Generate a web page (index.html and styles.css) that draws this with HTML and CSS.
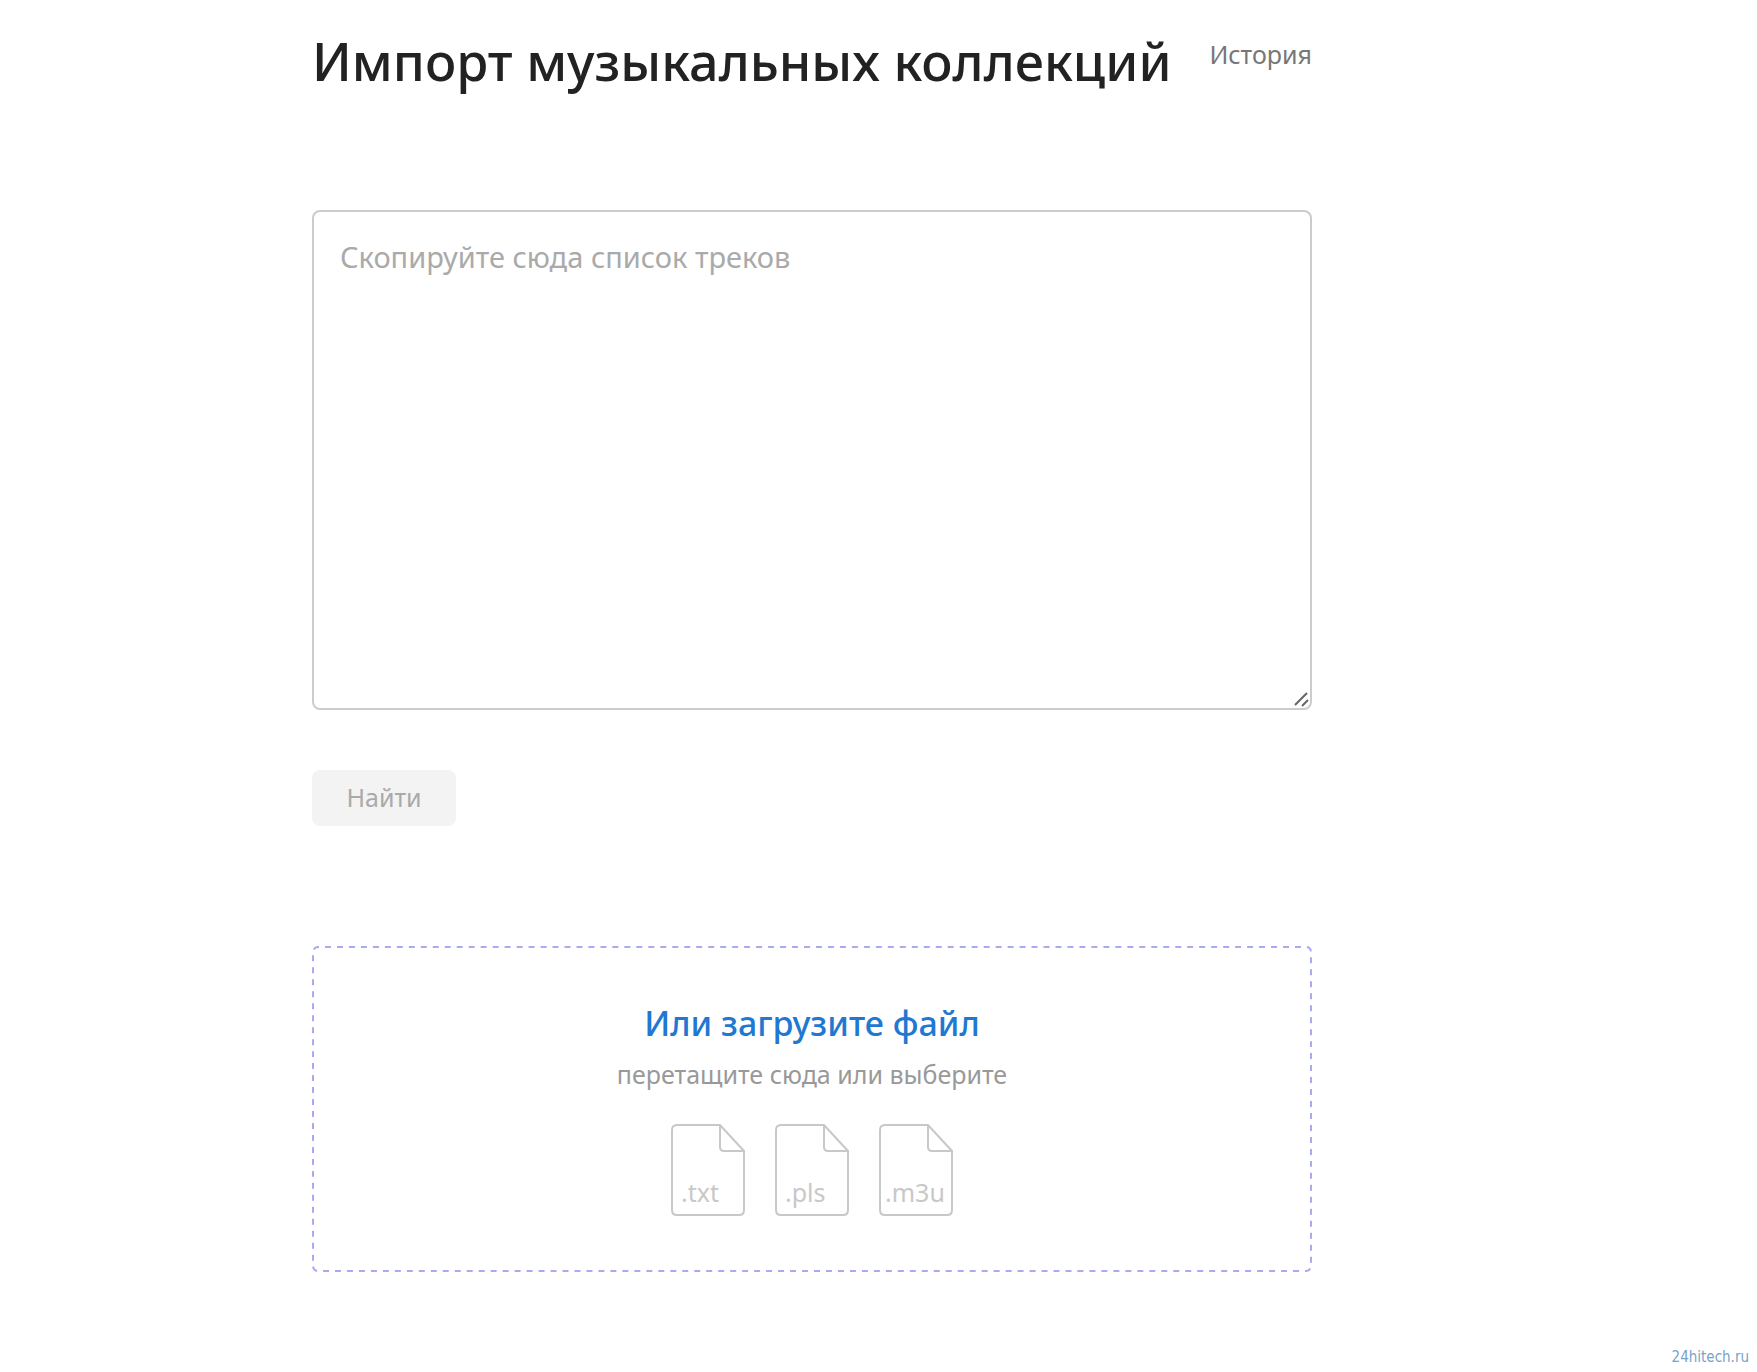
FILE: index.html
```html
<!DOCTYPE html>
<html lang="ru">
<head>
<meta charset="utf-8">
<meta name="viewport" content="width=device-width, initial-scale=1">
<title>Импорт музыкальных коллекций</title>
<link rel="stylesheet" href="styles.css">
</head>
<body>
<main class="page">
  <header class="header">
    <h1 class="title">Импорт музыкальных коллекций</h1>
    <a class="history" href="#history">История</a>
  </header>
  <form class="import">
    <div class="field">
      <textarea class="tracks" aria-label="Список треков" placeholder="Скопируйте сюда список треков"></textarea>
      <svg class="grip" viewBox="0 0 16 16" aria-hidden="true"><path d="M1 13 13 1M8 14 14 8"/></svg>
    </div>
    <button class="find" type="submit" disabled>Найти</button>
    <label class="upload">
      <svg class="outline" aria-hidden="true"><rect class="outline-dash" x="1" y="1" rx="5" pathLength="2640"/></svg>
      <input class="upload-input" type="file" accept=".txt,.pls,.m3u">
      <span class="upload-title">Или загрузите файл</span>
      <span class="upload-hint">перетащите сюда или выберите</span>
      <span class="formats">
        <svg class="file" viewBox="0 0 74 92"><path d="M49 1H6Q1 1 1 6V86Q1 91 6 91H68Q73 91 73 86V27ZM49 1V23Q49 27 53 27H73"/><text x="10" y="78">.txt</text></svg>
        <svg class="file" viewBox="0 0 74 92"><path d="M49 1H6Q1 1 1 6V86Q1 91 6 91H68Q73 91 73 86V27ZM49 1V23Q49 27 53 27H73"/><text x="10" y="78">.pls</text></svg>
        <svg class="file" viewBox="0 0 74 92"><path d="M49 1H6Q1 1 1 6V86Q1 91 6 91H68Q73 91 73 86V27ZM49 1V23Q49 27 53 27H73"/><text x="6" y="78">.m3u</text></svg>
      </span>
    </label>
  </form>
</main>
<footer class="footer"><a class="source" href="#source">24hitech.ru</a></footer>
</body>
</html>
```
FILE: styles.css
```css
* {
  box-sizing: border-box;
}

body {
  display: flex;
  flex-direction: column;
  min-height: 100vh;
  margin: 0;
  background: #fff;
  color: #222;
  font-family: "Noto Sans", sans-serif;
}

.page {
  width: 100%;
  max-width: 1312px;
  padding-left: 312px;
}

.header {
  display: flex;
  justify-content: space-between;
  align-items: flex-start;
  padding-top: 24px;
}

.title {
  margin: 0;
  font-size: 52px;
  line-height: 74px;
  font-weight: 500;
  white-space: nowrap;
}

.history {
  padding-top: 12px;
  color: #777;
  font-size: 25px;
  line-height: 36px;
  text-decoration: none;
}

.import {
  display: flex;
  flex-direction: column;
  align-items: flex-start;
  padding-top: 112px;
}

.field {
  position: relative;
  width: 100%;
}

.tracks {
  display: block;
  width: 100%;
  height: 500px;
  padding: 24px 26px;
  border: 2px solid #ccc;
  border-radius: 8px;
  background: #fff;
  color: #222;
  font: 400 29px/42px "Noto Sans", sans-serif;
  resize: none;
}

.tracks::placeholder {
  color: #aaa;
}

.grip {
  position: absolute;
  right: 2px;
  bottom: 2px;
  width: 16px;
  height: 16px;
  fill: none;
  stroke: #666;
  stroke-width: 2;
  pointer-events: none;
}

.find {
  width: 144px;
  height: 56px;
  margin-top: 60px;
  padding: 0 0 2px;
  border: 0;
  border-radius: 8px;
  background: #f3f3f3;
  color: #aaa;
  font: 400 25px/36px "Noto Sans", sans-serif;
}

.upload {
  position: relative;
  display: flex;
  flex-direction: column;
  align-items: center;
  width: 100%;
  margin-top: 120px;
  padding: 52px 0 56px;
}

.outline {
  position: absolute;
  inset: 0;
  width: 100%;
  height: 100%;
}

.outline-dash {
  width: calc(100% - 2px);
  height: calc(100% - 2px);
  fill: none;
  stroke: #aaaaf0;
  stroke-width: 2;
  stroke-dasharray: 6 6;
  stroke-dashoffset: 5;
}

.upload-input {
  position: absolute;
  width: 1px;
  height: 1px;
  opacity: 0;
}

.upload-title {
  color: #1f78d1;
  font-size: 34px;
  line-height: 50px;
  font-weight: 500;
}

.upload-hint {
  color: #999;
  font-size: 25px;
  line-height: 36px;
  margin-top: 8px;
}

.formats {
  display: flex;
  gap: 30px;
  margin-top: 32px;
}

.file {
  width: 74px;
  height: 92px;
  fill: none;
  stroke: #c8c8c8;
  stroke-width: 2;
}

.file text {
  fill: #c8c8c8;
  stroke: none;
  font-size: 25px;
}

.footer {
  display: flex;
  justify-content: flex-end;
  margin-top: auto;
  padding: 0 8px 4px;
}

.source {
  color: #77a3c7;
  font-family: "DejaVu Sans Condensed", "DejaVu Sans", sans-serif;
  font-size: 15px;
  line-height: 22px;
  text-decoration: none;
}
```
